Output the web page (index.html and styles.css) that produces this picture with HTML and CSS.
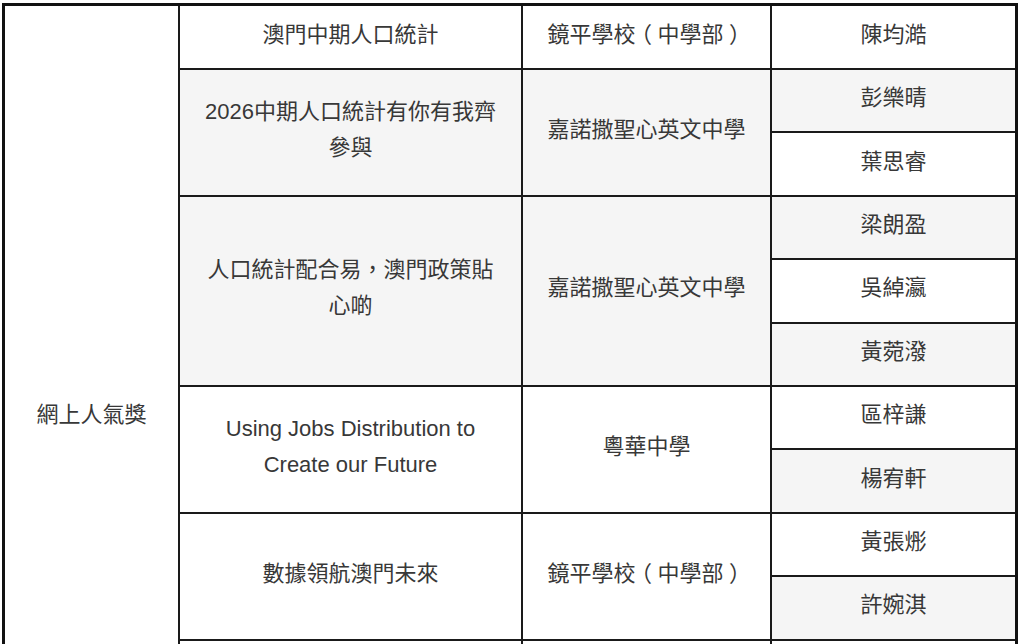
FILE: index.html
```html
<!DOCTYPE html>
<html lang="zh-Hant">
<head>
<meta charset="utf-8">
<title>網上人氣獎</title>
<link rel="stylesheet" href="styles.css">
</head>
<body>
<table class="award-table">
  <colgroup>
    <col class="c-award">
    <col class="c-title">
    <col class="c-school">
    <col class="c-name">
  </colgroup>
  <tbody>
    <tr>
      <td rowspan="13">網上人氣獎</td>
      <td>澳門中期人口統計</td>
      <td>鏡平學校<span class="paren">（</span>中學部<span class="paren">）</span></td>
      <td>陳均澔</td>
    </tr>
    <tr>
      <td rowspan="2">2026中期人口統計有你有我齊參與</td>
      <td rowspan="2">嘉諾撒聖心英文中學</td>
      <td>彭樂晴</td>
    </tr>
    <tr>
      <td>葉思睿</td>
    </tr>
    <tr>
      <td rowspan="3">人口統計配合易，澳門政策貼心啲</td>
      <td rowspan="3">嘉諾撒聖心英文中學</td>
      <td>梁朗盈</td>
    </tr>
    <tr>
      <td>吳綽瀛</td>
    </tr>
    <tr>
      <td>黃菀潑</td>
    </tr>
    <tr>
      <td rowspan="2">Using Jobs Distribution to Create our Future</td>
      <td rowspan="2">粵華中學</td>
      <td>區梓謙</td>
    </tr>
    <tr>
      <td>楊宥軒</td>
    </tr>
    <tr>
      <td rowspan="2">數據領航澳門未來</td>
      <td rowspan="2">鏡平學校<span class="paren">（</span>中學部<span class="paren">）</span></td>
      <td>黃張烿</td>
    </tr>
    <tr>
      <td>許婉淇</td>
    </tr>
    <tr>
      <td rowspan="3"></td>
      <td rowspan="3"></td>
      <td></td>
    </tr>
    <tr>
      <td></td>
    </tr>
    <tr>
      <td></td>
    </tr>
  </tbody>
</table>
</body>
</html>
```

FILE: styles.css
```css
html, body {
  margin: 0;
  padding: 0;
  background: #ffffff;
}

body {
  padding: 3px 0 0 2px;
  font-family: "Liberation Sans", "Noto Sans CJK TC", sans-serif;
  font-size: 22px;
  color: #383838;
}

.award-table {
  border-collapse: separate;
  border-spacing: 0;
  border: 3px solid #111111;
  table-layout: fixed;
  width: 1016px;
}

.c-award { width: 175px; }
.c-title { width: 343px; }
.c-school { width: 249px; }
.c-name { width: 243px; }

.award-table tr {
  height: 63.4px;
}

.award-table tr:first-child {
  height: 64px;
}

.award-table td {
  border-right: 2px solid #1a1a1a;
  border-bottom: 2px solid #1a1a1a;
  padding: 0 20px 5px;
  text-align: center;
  vertical-align: middle;
  line-height: 36px;
  background: #ffffff;
}

.award-table td:last-child {
  border-right: 0;
}

.award-table tr:nth-child(even) td {
  background: #f5f5f5;
}

.paren {
  font-feature-settings: "halt" 1;
  padding: 0 0.25em;
}
```
